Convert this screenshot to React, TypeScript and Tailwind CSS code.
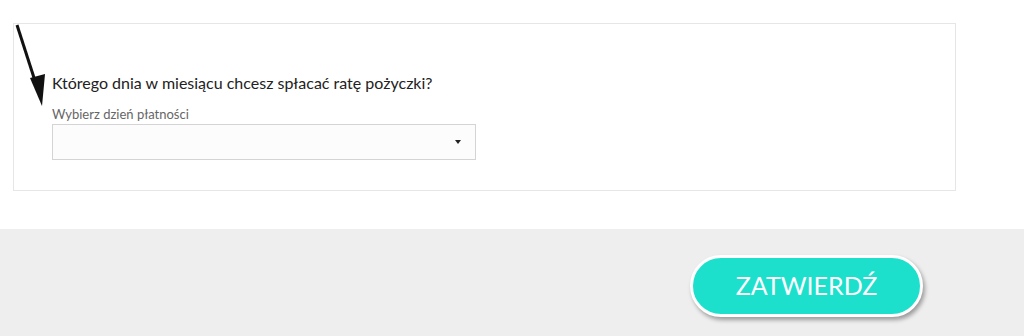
export default function App() {
  return (
    <div className="relative h-[336px] w-[1024px] overflow-hidden bg-white font-['Lato',sans-serif]">
      <div className="h-[229px] pl-[13px] pt-[23px]">
        <div className="h-[168px] w-[943px] border border-[#e6e6e6] bg-white pl-[38px] pt-[48px]">
          <h2 className="text-[16px] leading-[22px] text-[#222]">
            Którego dnia w miesiącu chcesz spłacać ratę pożyczki?
          </h2>
          <label className="mt-[13px] block text-[13px] leading-[15px] text-[#666]">
            Wybierz dzień płatności
          </label>
          <div className="mt-[2px] flex h-[36px] w-[424px] items-center justify-end border border-[#d4d4d4] bg-[#fcfcfc] pr-[14px]">
            <span className="h-0 w-0 border-x-[3px] border-t-[4px] border-x-transparent border-t-[#222]" />
          </div>
        </div>
      </div>
      <div className="flex h-[107px] justify-end bg-[#eeeeee] pr-[101px] pt-[26px]">
        <button className="flex h-[62px] w-[233px] items-center justify-center rounded-full border-[3px] border-white bg-[#1de0cc] text-[25px] text-white shadow-[2px_3px_4px_rgba(0,0,0,0.35)]">
          ZATWIERDŹ
        </button>
      </div>
      <svg className="absolute left-0 top-0" width="60" height="120" viewBox="0 0 60 120">
        <line x1="17" y1="25" x2="36" y2="84" stroke="#111" strokeWidth="3" />
        <polygon points="30,78 45,74 42,106" fill="#111" />
      </svg>
    </div>
  )
}
